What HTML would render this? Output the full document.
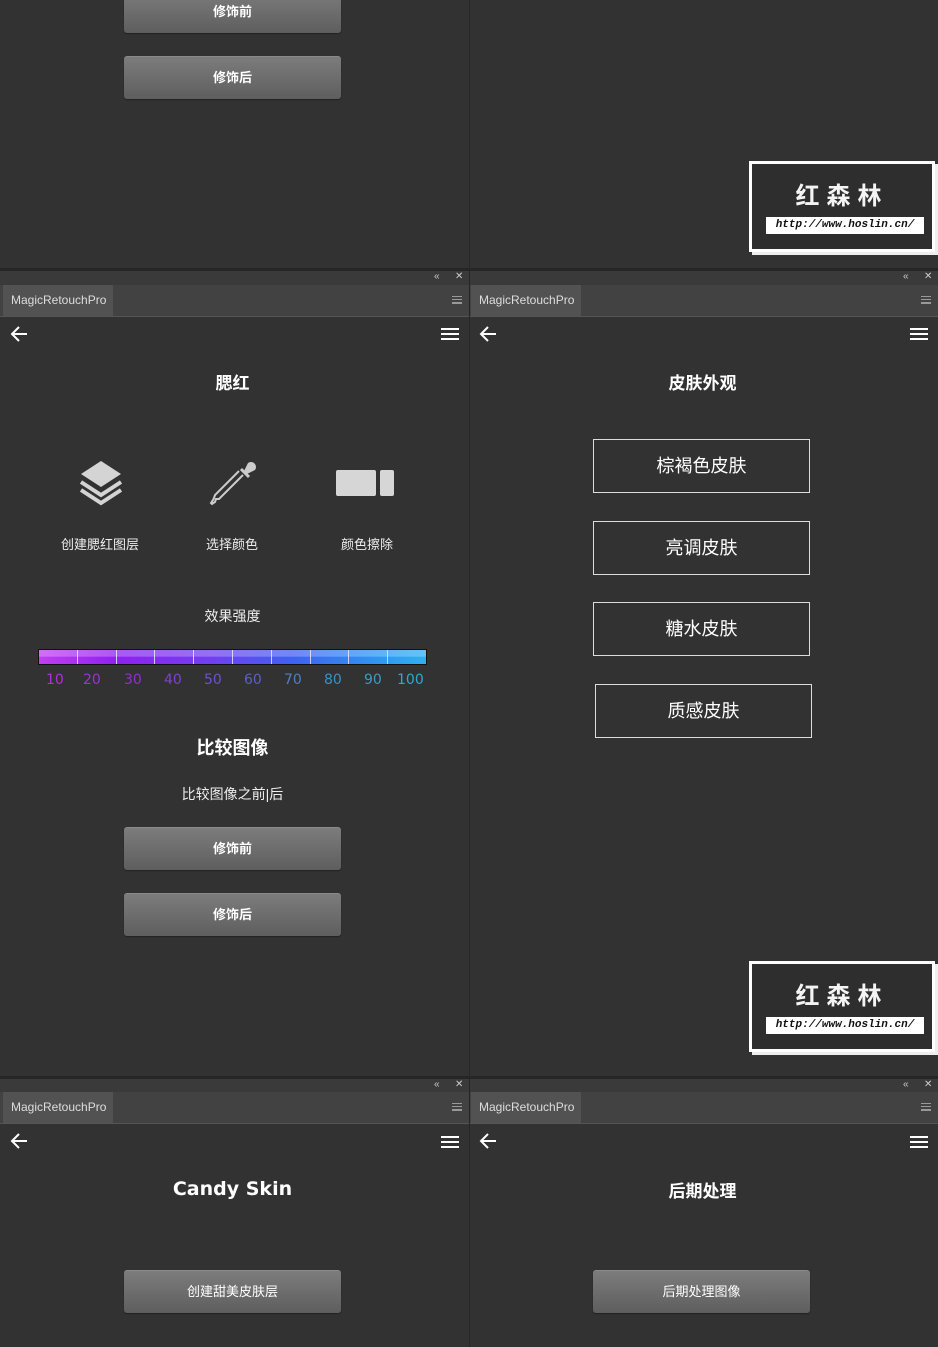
<!DOCTYPE html>
<html><head><meta charset="utf-8"><style>
*{margin:0;padding:0;box-sizing:border-box}
body{width:938px;height:1347px;background:#323232;position:relative;overflow:hidden;font-family:"Liberation Sans","Noto Sans CJK SC",sans-serif;color:#eee}
.a{position:absolute}
.strip{position:absolute;height:3px;background:#262626}
.hdr{position:absolute;height:14px;background:#3a3a3a;color:#ccc;font-size:10px}
.tabrow{position:absolute;height:32px;background:#424242;border-bottom:1px solid #555}
.tab{position:absolute;left:3px;top:0;width:110px;height:31px;background:#525252;color:#ddd;font-size:12px;line-height:30px;padding-left:8px}
.mi{position:absolute;width:10px;height:8px;border-top:1px solid #999;border-bottom:1px solid #999}
.mi:after{content:"";position:absolute;left:0;right:0;top:2px;height:2px;border-top:1px solid #999;border-bottom:1px solid #999}
.ham{position:absolute;width:18px;height:12px;border-top:2px solid #fff;border-bottom:2px solid #fff}
.ham:after{content:"";position:absolute;left:0;right:0;top:3px;height:2px;background:#fff}
.arrow{position:absolute;width:20px;height:20px}
.title{position:absolute;width:465px;text-align:center;font-weight:bold;color:#fff;font-size:17px}
.btn{position:absolute;width:217px;height:43px;border-radius:3px;background:linear-gradient(#7c7c7c,#5e5e5e);border-top:1px solid #8a8a8a;box-shadow:0 1px 1px #222;color:#fff;text-align:center;line-height:42px;font-size:13px;font-weight:bold}
.obtn{position:absolute;width:217px;height:54px;border:1px solid #ddd;color:#fff;text-align:center;line-height:52px;font-size:18px}
.wm{position:absolute;width:186px;height:91px;border:3px solid #fff;background:#2e2e2e;box-shadow:3px 3px 0 #eee}
.wm .t{position:absolute;left:0;right:0;top:12px;text-align:center;font-size:24px;font-weight:bold;letter-spacing:7px;color:#f4f4f4}
.wm .u{position:absolute;left:14px;width:158px;top:53px;height:17px;background:#fff;color:#111;font-family:"Liberation Mono",monospace;font-style:italic;font-weight:bold;font-size:11px;text-align:center;line-height:17px}
.vl{position:absolute;left:469px;width:1px;background:#262626}
</style></head><body>

<div class="vl" style="top:0;height:1347px"></div>

<div class="btn" style="left:124px;top:-10px">修饰前</div>
<div class="btn" style="left:124px;top:56px">修饰后</div>
<div class="wm" style="left:749px;top:161px"><div class="t">红森林</div><div class="u">http://www.hoslin.cn/</div></div>

<div class="strip" style="left:0;top:268px;width:938px"></div>
<div class="hdr" style="left:0;top:271px;width:469px"><span class="a" style="left:434px;top:0">«</span><span class="a" style="left:455px;top:0">✕</span></div>
<div class="hdr" style="left:470px;top:271px;width:468px"><span class="a" style="left:433px;top:0">«</span><span class="a" style="left:454px;top:0">✕</span></div>
<div class="tabrow" style="left:0;top:285px;width:469px"><div class="tab">MagicRetouchPro</div><div class="mi" style="left:452px;top:11px"></div></div>
<div class="tabrow" style="left:470px;top:285px;width:468px"><div class="tab" style="left:1px">MagicRetouchPro</div><div class="mi" style="left:451px;top:11px"></div></div>

<svg class="arrow" style="left:9px;top:324px" viewBox="0 0 20 20"><path d="M18 10H3M10 3L3 10L10 17" stroke="#fff" stroke-width="2" fill="none"/></svg>
<div class="ham" style="left:441px;top:328px"></div>
<svg class="arrow" style="left:478px;top:324px" viewBox="0 0 20 20"><path d="M18 10H3M10 3L3 10L10 17" stroke="#fff" stroke-width="2" fill="none"/></svg>
<div class="ham" style="left:910px;top:328px"></div>

<div class="title" style="left:0;top:369px">腮红</div>
<svg class="a" style="left:78px;top:458px" width="46" height="48" viewBox="0 0 46 48"><path d="M23 3L43 16L23 29L3 16Z" fill="#d4d4d4"/><path d="M3 24L23 37L43 24" stroke="#d4d4d4" stroke-width="4" fill="none"/><path d="M3 32L23 45L43 32" stroke="#d4d4d4" stroke-width="4" fill="none"/></svg>
<svg class="a" style="left:208px;top:458px" width="50" height="50" viewBox="0 0 50 50"><path d="M36 13L40 5a5 5 0 0 1 7 7L39 16Z" fill="#ccc"/><path d="M33 11L41 19" stroke="#ccc" stroke-width="3"/><path d="M35 17L11 41L8 41L7 44L4 46L3 45L5 42L6 40L7 37L31 13" stroke="#ccc" stroke-width="2" fill="none"/></svg>
<div class="a" style="left:336px;top:470px;width:40px;height:26px;background:#d6d6d6;border-radius:2px"></div>
<div class="a" style="left:380px;top:470px;width:14px;height:26px;background:#d6d6d6;border-radius:2px"></div>
<div class="a" style="left:40px;top:534px;width:120px;text-align:center;font-size:13px">创建腮红图层</div>
<div class="a" style="left:172px;top:534px;width:120px;text-align:center;font-size:13px">选择颜色</div>
<div class="a" style="left:307px;top:534px;width:120px;text-align:center;font-size:13px">颜色擦除</div>
<div class="a" style="left:0;top:606px;width:465px;text-align:center;font-size:14px">效果强度</div>
<div class="a" style="left:38px;top:649px;width:389px;height:16px;border:1px solid #111;background:linear-gradient(90deg,#c040f0,#9020f0 20%,#7040f0 45%,#4060f0 65%,#3090f0 85%,#30b0f0);display:flex">
<div style="position:absolute;inset:0;background:linear-gradient(rgba(255,255,255,.25) 45%,rgba(0,0,0,0) 50%)"></div>
<div style="flex:1;border-right:1px solid #ccf"></div><div style="flex:1;border-right:1px solid #ccf"></div><div style="flex:1;border-right:1px solid #ccf"></div><div style="flex:1;border-right:1px solid #ccf"></div><div style="flex:1;border-right:1px solid #ccf"></div><div style="flex:1;border-right:1px solid #ccf"></div><div style="flex:1;border-right:1px solid #ccf"></div><div style="flex:1;border-right:1px solid #ccf"></div><div style="flex:1;border-right:1px solid #ccf"></div><div style="flex:1"></div></div>
<div class="a" style="top:672px;left:0;width:469px;font-size:14px;font-family:'DejaVu Sans',sans-serif">
<span class="a" style="left:46px;color:#b030d8">10</span><span class="a" style="left:83px;color:#a030d8">20</span><span class="a" style="left:124px;color:#9030d0">30</span><span class="a" style="left:164px;color:#8040d0">40</span><span class="a" style="left:204px;color:#7050d0">50</span><span class="a" style="left:244px;color:#5a60c8">60</span><span class="a" style="left:284px;color:#4a80c8">70</span><span class="a" style="left:324px;color:#3a90c8">80</span><span class="a" style="left:364px;color:#3a9ac8">90</span><span class="a" style="left:397px;color:#30a8d0">100</span></div>
<div class="title" style="left:0;top:734px;font-size:18px">比较图像</div>
<div class="a" style="left:0;top:784px;width:465px;text-align:center;font-size:14px">比较图像之前|后</div>
<div class="btn" style="left:124px;top:827px">修饰前</div>
<div class="btn" style="left:124px;top:893px">修饰后</div>

<div class="title" style="left:470px;top:369px">皮肤外观</div>
<div class="obtn" style="left:593px;top:439px">棕褐色皮肤</div>
<div class="obtn" style="left:593px;top:521px">亮调皮肤</div>
<div class="obtn" style="left:593px;top:602px">糖水皮肤</div>
<div class="obtn" style="left:595px;top:684px">质感皮肤</div>
<div class="wm" style="left:749px;top:961px"><div class="t">红森林</div><div class="u">http://www.hoslin.cn/</div></div>

<div class="strip" style="left:0;top:1076px;width:938px"></div>
<div class="hdr" style="left:0;top:1079px;width:469px"><span class="a" style="left:434px;top:0">«</span><span class="a" style="left:455px;top:0">✕</span></div>
<div class="hdr" style="left:470px;top:1079px;width:468px"><span class="a" style="left:433px;top:0">«</span><span class="a" style="left:454px;top:0">✕</span></div>
<div class="tabrow" style="left:0;top:1092px;width:469px"><div class="tab">MagicRetouchPro</div><div class="mi" style="left:452px;top:11px"></div></div>
<div class="tabrow" style="left:470px;top:1092px;width:468px"><div class="tab" style="left:1px">MagicRetouchPro</div><div class="mi" style="left:451px;top:11px"></div></div>
<svg class="arrow" style="left:9px;top:1131px" viewBox="0 0 20 20"><path d="M18 10H3M10 3L3 10L10 17" stroke="#fff" stroke-width="2" fill="none"/></svg>
<div class="ham" style="left:441px;top:1136px"></div>
<svg class="arrow" style="left:478px;top:1131px" viewBox="0 0 20 20"><path d="M18 10H3M10 3L3 10L10 17" stroke="#fff" stroke-width="2" fill="none"/></svg>
<div class="ham" style="left:910px;top:1136px"></div>

<div class="title" style="left:0;top:1178px;font-size:19px;font-family:'DejaVu Sans',sans-serif">Candy Skin</div>
<div class="btn" style="left:124px;top:1270px;font-weight:normal">创建甜美皮肤层</div>
<div class="title" style="left:470px;top:1177px">后期处理</div>
<div class="btn" style="left:593px;top:1270px;font-weight:normal">后期处理图像</div>
</body></html>
